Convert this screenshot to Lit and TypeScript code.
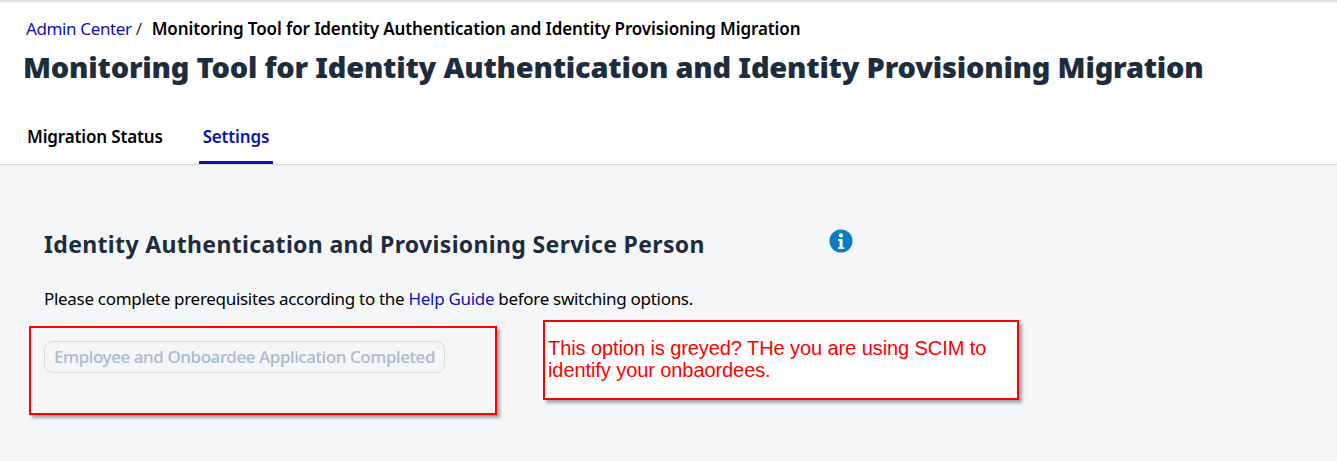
import { LitElement, html, css } from "lit";
import { customElement } from "lit/decorators.js";

@customElement("app-root")
export class AppRoot extends LitElement {
  static styles = css`
    :host { display: block; width: 1337px; height: 461px; overflow: hidden; position: relative; background: #f5f6f7; font-family: "Noto Sans", sans-serif; color: #000; }
    .header { background: #fff; height: 164px; border-bottom: 1px solid #d9d9d9; display: flex; flex-direction: column; }
    .topshade { height: 3px; background: linear-gradient(#d5d7da, #f4f5f6); }
    .crumbs { display: flex; align-items: center; margin: 16px 0 0 26px; height: 20px; font-size: 17px; line-height: 20px; letter-spacing: -0.37px; }
    .crumbs a { color: #0a14b0; }
    .sep { margin-left: 4px; color: #32363a; }
    .current { margin-left: 10px; font-weight: 600; letter-spacing: -0.11px; }
    h1 { margin: 9px 0 0 23px; font-size: 29px; line-height: 38px; font-weight: 900; color: #1d2d3e; letter-spacing: -0.21px; white-space: nowrap; }
    .tabs { display: flex; margin: auto 0 0 23px; height: 46px; }
    .tab { padding: 8px 4px 0; font-size: 17px; font-weight: 600; letter-spacing: -0.15px; line-height: 22px; box-sizing: border-box; }
    .tab.active { color: #0a14b0; border-bottom: 3px solid #0a14b0; border-radius: 2px 2px 0 0; margin-left: 32px; }
    .content { padding: 61px 0 0 44px; }
    h2 { margin: 0; font-size: 23px; line-height: 36px; font-weight: 700; color: #1d2d3e; letter-spacing: 0.34px; white-space: nowrap; }
    .titlerow { display: flex; align-items: flex-start; }
    .info { margin: 3px 0 0 124px; width: 24px; height: 24px; flex: none; }
    p { margin: 26px 0 0; font-size: 17px; line-height: 22px; letter-spacing: -0.3px; }
    p a { color: #0a14b0; }
    .btn { margin-top: 31px; width: 401px; height: 32px; box-sizing: border-box; border: 1px solid #d9dadc; border-radius: 9px; color: #a9bbcf; font-size: 17px; font-weight: 500; line-height: 29px; padding-left: 9px; letter-spacing: -0.43px; white-space: nowrap; }
    .note { position: absolute; box-sizing: border-box; border: 2px solid #f00; box-shadow: 3px 3px 3px rgba(90, 100, 110, .55); }
    .note.a { left: 29px; top: 326px; width: 468px; height: 89px; }
    .note.b { left: 543px; top: 320px; width: 476px; height: 80px; background: #fff; color: #f00; font-family: "Liberation Sans", Arial, sans-serif; font-size: 20px; letter-spacing: -0.08px; line-height: 22px; padding: 15px 3px 0 3px; }
  `;

  render() {
    return html`
      <div class="header">
        <div class="topshade"></div>
        <div class="crumbs"><a>Admin Center</a><span class="sep">/</span><span class="current">Monitoring Tool for Identity Authentication and Identity Provisioning Migration</span></div>
        <h1>Monitoring Tool for Identity Authentication and Identity Provisioning Migration</h1>
        <div class="tabs">
          <div class="tab">Migration Status</div>
          <div class="tab active">Settings</div>
        </div>
      </div>
      <div class="content">
        <div class="titlerow">
          <h2>Identity Authentication and Provisioning Service Person</h2>
          <svg class="info" viewBox="0 0 24 24">
            <circle cx="12" cy="12" r="11.5" fill="#0a7cc1"></circle>
            <circle cx="12" cy="6.4" r="2.1" fill="#fff"></circle>
            <path d="M9 10h4.6v8.2h1.6v1.8H8.9v-1.8h1.7v-6.4H9z" fill="#fff"></path>
          </svg>
        </div>
        <p>Please complete prerequisites according to the <a>Help Guide</a> before switching options.</p>
        <div class="btn">Employee and Onboardee Application Completed</div>
      </div>
      <div class="note a"></div>
      <div class="note b">This option is greyed? THe you are using SCIM to identify your onbaordees.</div>
    `;
  }
}
